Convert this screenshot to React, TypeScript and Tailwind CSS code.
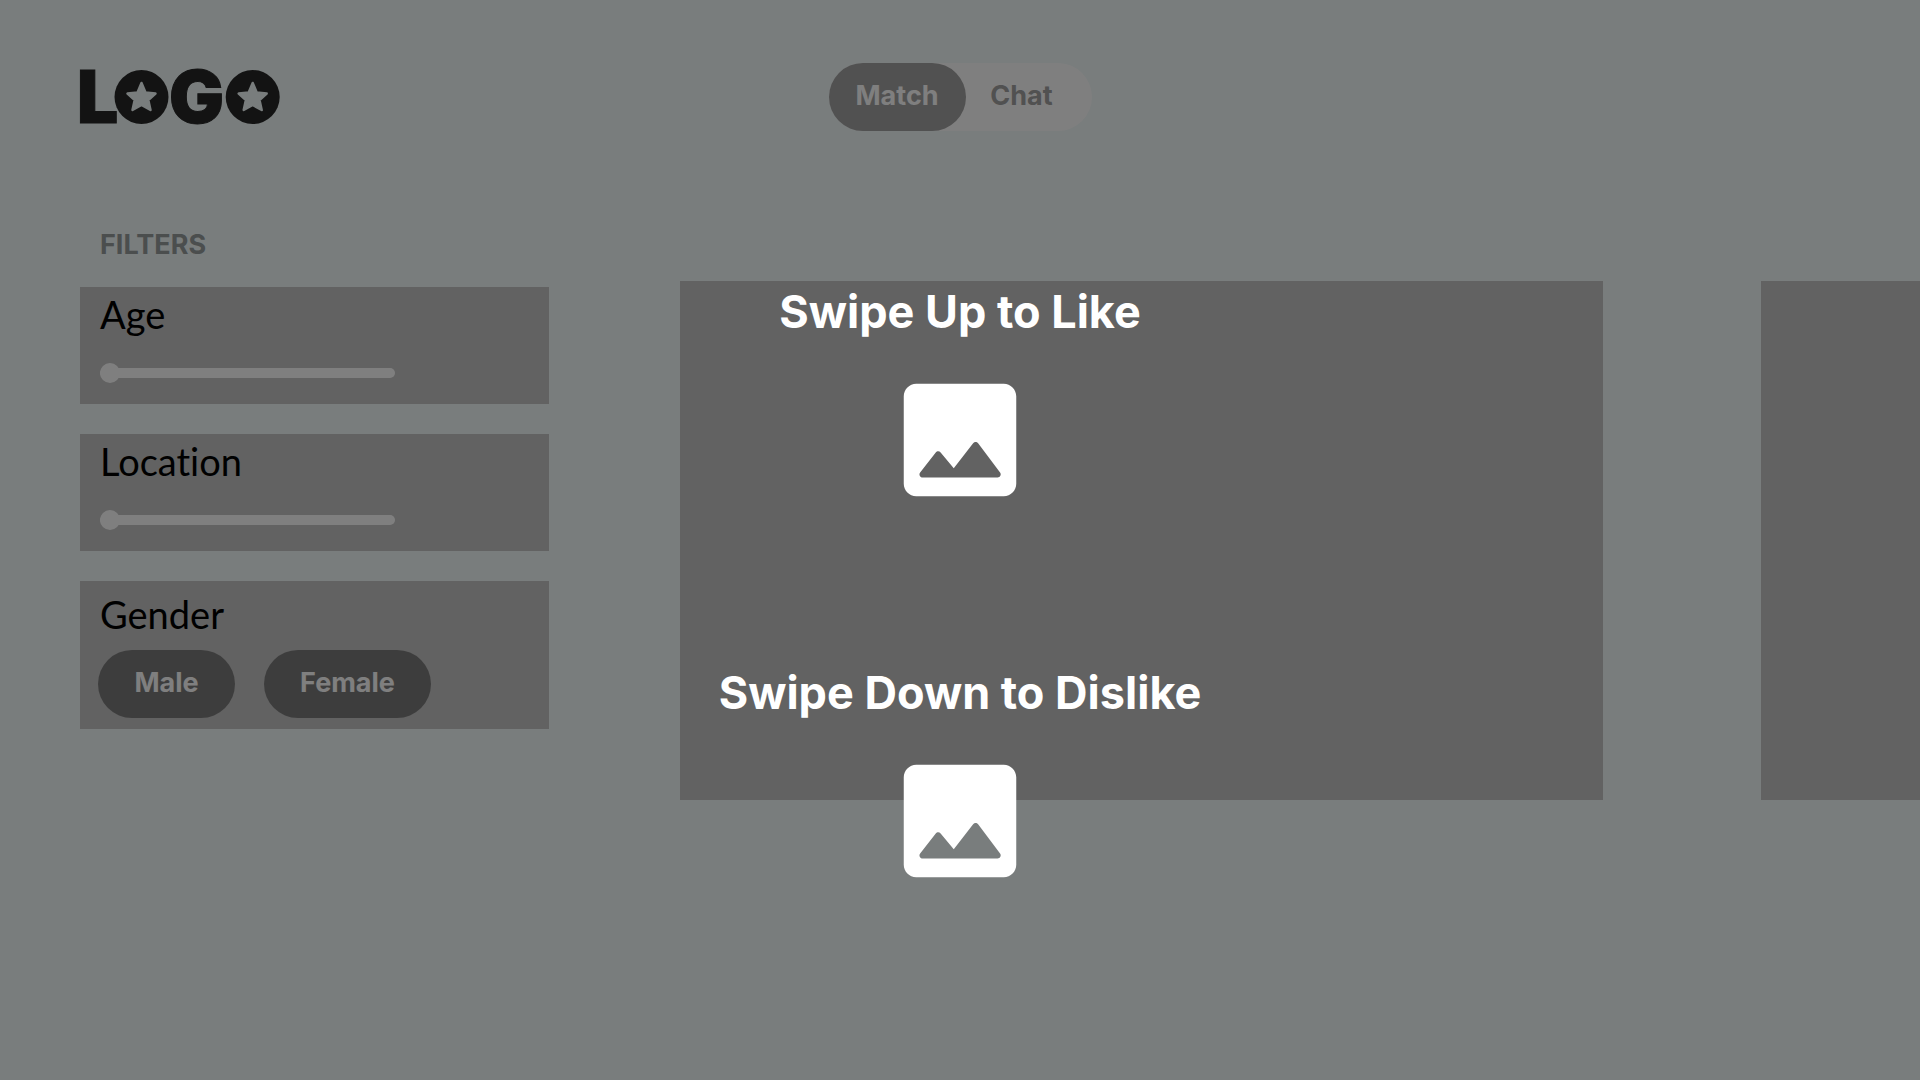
import { useState } from "react";

function Star({ cx }: { cx: number }) {
  return (
    <g transform={`translate(${cx} 27)`}>
      <circle r="27" fill="#272727" />
      <path
        d="M0 -14 L4 -4.500 L14 -3.500 L6.800 3 L9 13 L0 8 L-9 13 L-6.800 3 L-14 -3.500 L-4 -4.500 Z"
        fill="#f2fafa"
        stroke="#f2fafa"
        strokeWidth="2.500"
        strokeLinejoin="round"
      />
    </g>
  );
}

function Logo() {
  return (
    <svg width="200" height="54" viewBox="0 0 200 54" className="overflow-visible" role="img" aria-label="Logo">
      <g
        fill="#272727"
        stroke="#272727"
        strokeWidth="1"
        fontFamily="Inter, sans-serif"
        fontWeight="900"
        fontSize="73"
      >
        <text x="-3" y="53">L</text>
        <text x="89" y="53">G</text>
      </g>
      <Star cx={61.5} />
      <Star cx={172.7} />
    </svg>
  );
}

function RangeCard({ id, label }: { id: string; label: string }) {
  const [value, setValue] = useState(0);
  return (
    <div className="bg-[#c4c4c4] px-5 pt-[3px] pb-[21px]">
      <label
        htmlFor={id}
        className="block font-[Lato,sans-serif] text-[38px] leading-[48px] text-black [font-variant-ligatures:none]"
      >
        {label}
      </label>
      <input
        id={id}
        type="range"
        min={0}
        max={100}
        value={value}
        onChange={(e) => setValue(Number(e.target.value))}
        className="mt-[25px] block h-5 w-[295px] max-w-full cursor-pointer appearance-none bg-transparent [&::-webkit-slider-runnable-track]:h-[10px] [&::-webkit-slider-runnable-track]:rounded-full [&::-webkit-slider-runnable-track]:bg-white [&::-webkit-slider-thumb]:-mt-[5px] [&::-webkit-slider-thumb]:size-5 [&::-webkit-slider-thumb]:appearance-none [&::-webkit-slider-thumb]:rounded-full [&::-webkit-slider-thumb]:bg-white"
      />
    </div>
  );
}

function SwipeHint({ title }: { title: string }) {
  return (
    <div className="flex flex-col items-center gap-6">
      <h2 className="text-[45px] leading-[58px] font-bold text-white">{title}</h2>
      <svg viewBox="0 0 24 24" className="size-[150px] fill-white" aria-hidden="true">
        <path d="M21 19V5c0-1.100-.9-2-2-2H5c-1.100 0-2 .9-2 2v14c0 1.100.9 2 2 2h14c1.100 0 2-.9 2-2zM8.900 13.980l2.100 2.530 3.100-3.990c.2-.26.6-.26.8.01l3.510 4.680c.25.33.01.8-.4.8H6.020c-.42 0-.65-.48-.4-.81L8.120 14c.19-.26.57-.27.78-.02z" />
      </svg>
    </div>
  );
}

export default function App() {
  return (
    <div className="relative min-h-screen overflow-hidden bg-[#f2fafa] font-[Inter,sans-serif]">
      <header className="grid grid-cols-[1fr_auto_1fr] items-center px-20 pt-[63px]">
        <a href="#home" className="justify-self-start">
          <Logo />
        </a>
        <nav className="flex h-[68px] w-[263px] rounded-full bg-white text-[27px] leading-[34px] font-bold">
          <button className="h-full w-[137px] rounded-full bg-[#a2a2a2] pb-0.5 text-white">Match</button>
          <button className="h-full flex-1 pr-3.5 pb-0.5 text-[#a2a2a2]">Chat</button>
        </nav>
      </header>

      <main className="mt-[97px] flex gap-[131px] pl-20">
        <aside className="w-[469px] shrink-0">
          <h1 className="pl-5 text-[27px] leading-[34px] font-bold text-[#969c9c]">FILTERS</h1>
          <div className="mt-[25px] flex flex-col gap-[30px]">
            <RangeCard id="age" label="Age" />
            <RangeCard id="location" label="Location" />
            <section className="bg-[#c4c4c4] pt-[9px] pb-[11px]">
              <h3 className="px-5 font-[Lato,sans-serif] text-[38px] leading-[48px] text-black">Gender</h3>
              <div className="mt-3 flex gap-[29px] px-[18px] text-[27px] leading-[34px] font-bold text-white">
                <button className="h-[68px] w-[137px] rounded-full bg-[#7b7b7b] pb-0.5">Male</button>
                <button className="h-[68px] w-[167px] rounded-full bg-[#7b7b7b] pb-0.5">Female</button>
              </div>
            </section>
          </div>
        </aside>
        <div className="mt-[53px] flex min-w-0 flex-1 items-start gap-[158px] overflow-hidden">
          <article className="aspect-[923/519] w-[74.4%] shrink-0 bg-[#c4c4c4]" />
          <article className="aspect-[923/519] w-[74.4%] shrink-0 bg-[#c4c4c4]" />
        </div>
      </main>

      <div className="absolute inset-0 flex flex-col items-center gap-[149px] bg-black/50 pt-[283px]">
        <SwipeHint title="Swipe Up to Like" />
        <SwipeHint title="Swipe Down to Dislike" />
      </div>
    </div>
  );
}
